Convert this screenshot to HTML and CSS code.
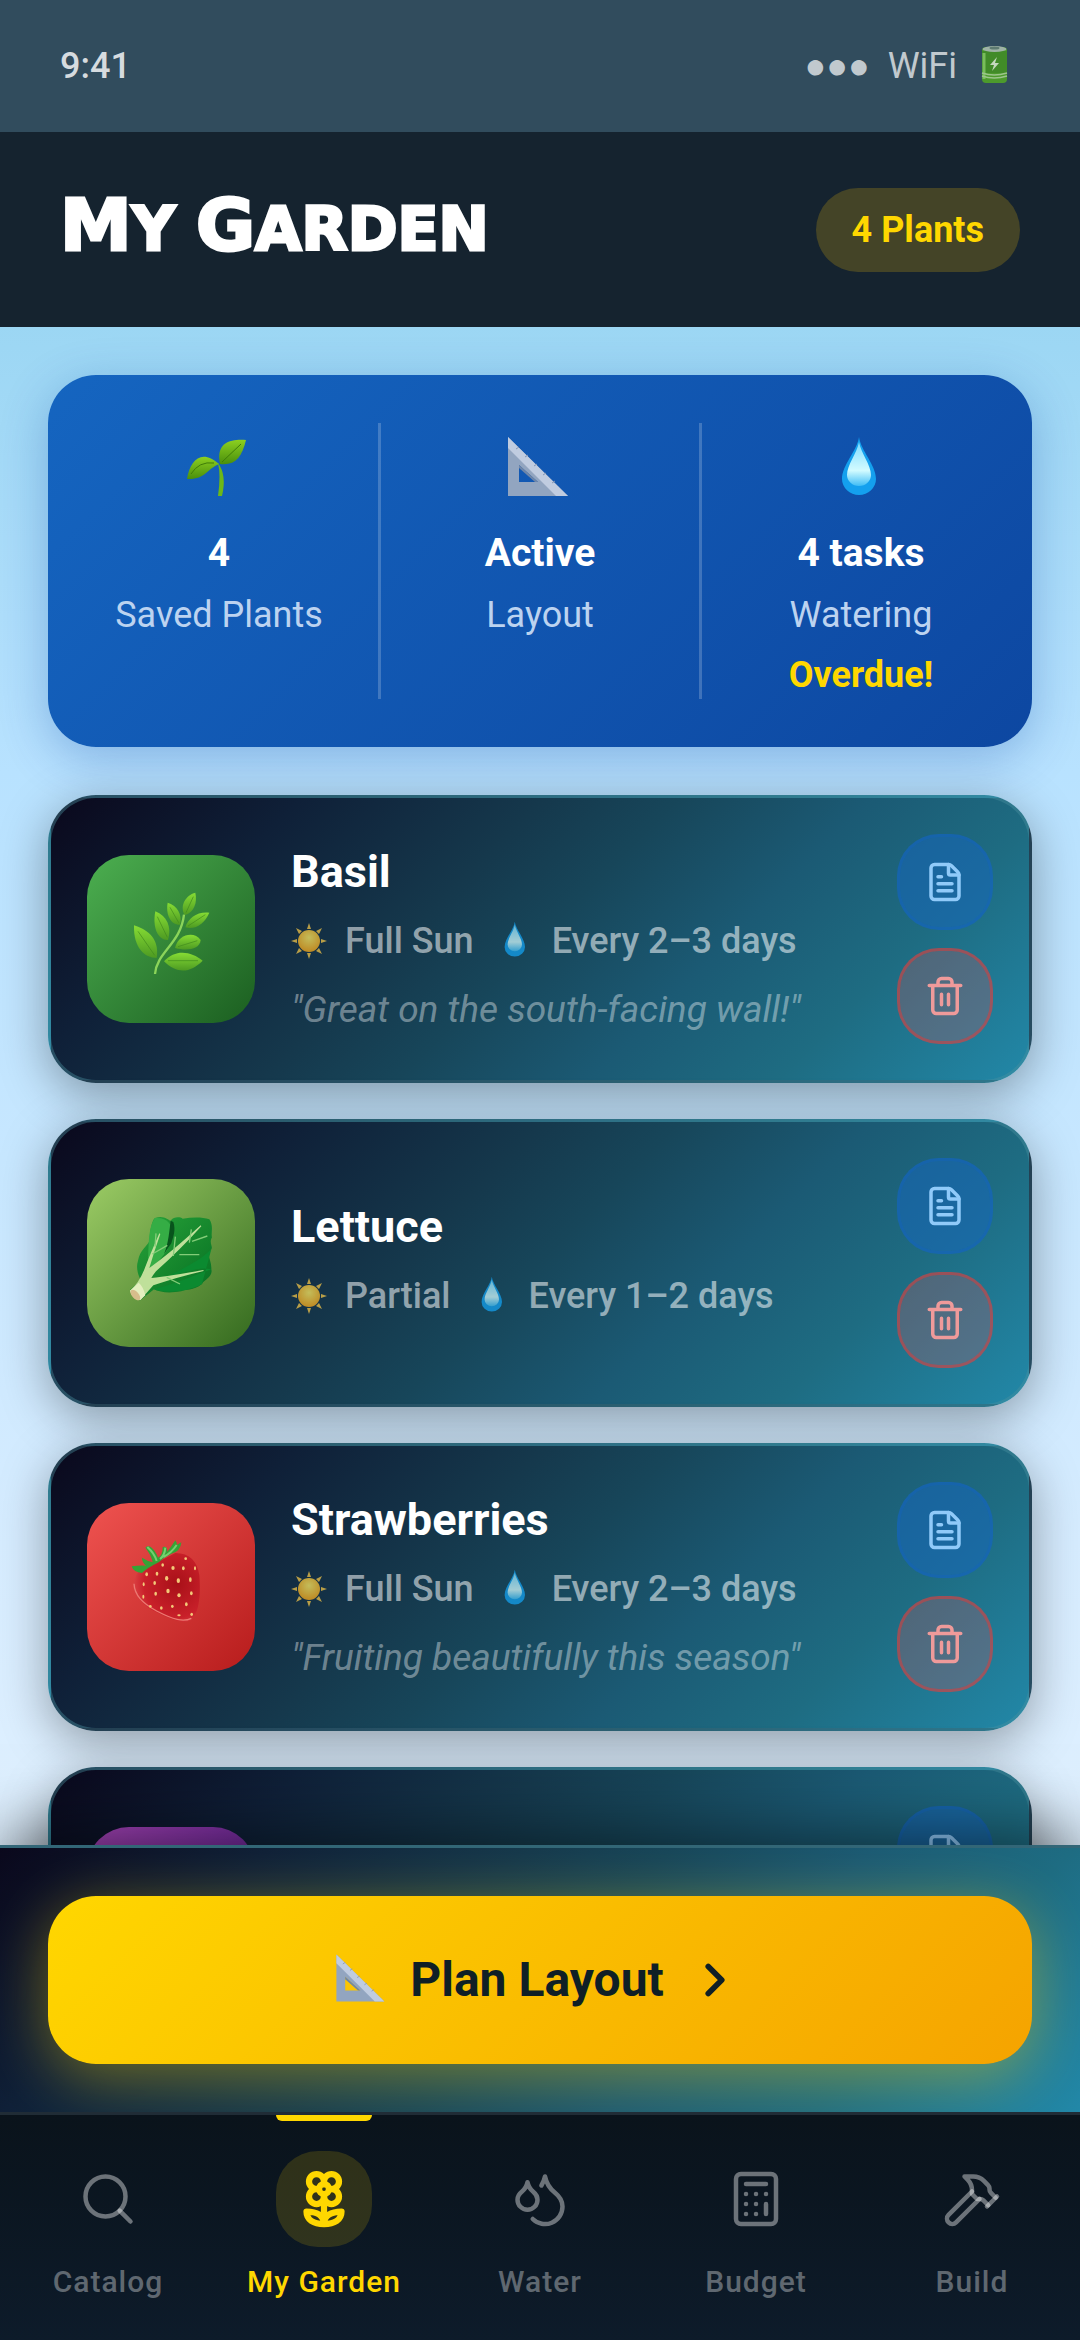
FILE: index.html
```html
<!DOCTYPE html>
<html lang="en">
<head>
<meta charset="utf-8">
<meta name="viewport" content="width=device-width, initial-scale=1">
<title>My Garden</title>
<link rel="stylesheet" href="styles.css">
</head>
<body>
<svg class="defs" aria-hidden="true">
  <defs>
    <linearGradient id="g-leaf" x1="0" y1="0" x2="0" y2="1"><stop offset="0" stop-color="#8cd020"/><stop offset="1" stop-color="#4a8f0c"/></linearGradient>
    <linearGradient id="g-drop" x1="0" y1="0" x2="0" y2="1"><stop offset="0" stop-color="#7fdcff"/><stop offset="0.65" stop-color="#d2fbff"/><stop offset="1" stop-color="#3fbdf6"/></linearGradient>
    <radialGradient id="g-sun" cx="0.5" cy="0.35" r="0.65"><stop offset="0" stop-color="#ffec62"/><stop offset="1" stop-color="#f8a818"/></radialGradient>
    <linearGradient id="g-lettuce" x1="0" y1="0" x2="1" y2="1"><stop offset="0" stop-color="#2aa53a"/><stop offset="1" stop-color="#056e22"/></linearGradient>
    <radialGradient id="g-berry" cx="0.65" cy="0.45" r="0.7"><stop offset="0" stop-color="#a81018"/><stop offset="0.7" stop-color="#c9202a"/><stop offset="1" stop-color="#e04a4a"/></radialGradient>
    <linearGradient id="g-sprig" x1="0" y1="0" x2="0" y2="1"><stop offset="0" stop-color="#86dc34"/><stop offset="1" stop-color="#4d9a22"/></linearGradient>
    <symbol id="drop" viewBox="2 2 60 60"><path d="M30 0C32 14 47 28 47 42a17 16 0 0 1-34 0C13 28 28 14 30 0Z" fill="#14a0ee"/><path d="M30 5C32 16 42 28 42 38a12 11 0 0 1-24 0C18 28 28 16 30 5Z" fill="url(#g-drop)"/></symbol>
    <symbol id="sun" viewBox="0 0 36 36"><g fill="#f0c348"><path d="m18 0 2 6h-4ZM18 36l2-6h-4ZM0 18l6-2v4ZM36 18l-6-2v4ZM5 5l6 3-3 3ZM31 5l-6 3 3 3ZM5 31l6-3-3-3ZM31 31l-6-3 3-3Z"/></g><circle cx="18" cy="18" r="11" fill="url(#g-sun)"/></symbol>
    <symbol id="square" viewBox="2 2 60 60"><path fill-rule="evenodd" d="M0 0 60 59H0ZM11 28v17h19Z" fill="#92a5c0"/><path d="M0 0 60 59H48L0 11Z" fill="#c0cce0"/><path d="m11 28 19 17h-3L11 31Z" fill="#6f86a8"/><path d="m8 12 3-2M17 20l3-2M26 29l3-2M35 38l3-2M44 46l3-2" stroke="#8496b4"/></symbol>
    <symbol id="note" viewBox="0 0 24 24"><path d="M6 22a2 2 0 0 1-2-2V4a2 2 0 0 1 2-2h8a2.4 2.4 0 0 1 1.704.706l3.588 3.588A2.4 2.4 0 0 1 20 8v12a2 2 0 0 1-2 2z"/><path d="M14 2v5a1 1 0 0 0 1 1h5M10 9H8M16 13H8M16 17H8"/></symbol>
    <symbol id="trash" viewBox="0 0 24 24"><path d="M10 11v6M14 11v6M19 6v14a2 2 0 0 1-2 2H7a2 2 0 0 1-2-2V6M3 6h18M8 6V4a2 2 0 0 1 2-2h4a2 2 0 0 1 2 2v2"/></symbol>
  </defs>
</svg>

<div class="status-bar">
  <span class="time">9:41</span>
  <span class="status-icons">
    <span class="signal">●●●</span>
    <span>WiFi</span>
    <svg class="battery" viewBox="3 2 45 45" role="img" aria-label="Battery"><rect x="10" y="5" width="25" height="36" rx="4" fill="#4c9a2c"/><rect x="10" y="9" width="25" height="22" fill="#418b28"/><ellipse cx="22.500" cy="7" rx="12" ry="3" fill="#9fb3a6"/><ellipse cx="22.500" cy="6" rx="5" ry="1.500" fill="#5d7a70"/><path d="M12 11v26" stroke="#79bd5b" stroke-width="3"/><path d="M10 31q12 4 25 0M10 34q12 4 25 0" stroke="#9cc58c" stroke-width="1.500" fill="none"/><path d="m25 15-7 8h4l-2 6 7-8h-4Z" fill="#c4d8bd"/></svg>
  </span>
</div>

<header class="header">
  <h1 class="title"><span class="cap">M</span>y <span class="cap">G</span>arden</h1>
  <span class="badge">4 Plants</span>
</header>

<main class="content">
  <section class="stats" aria-label="Summary">
    <div class="stat">
      <svg class="stat-icon" viewBox="0 0 60 60"><path d="M29 24q9 12 4 33h-4Q32 36 29 24Z" fill="#6cb818"/><path d="M31 25C26 2 44 0 57 1 53 18 46 27 31 25Z" fill="url(#g-leaf)"/><path d="M30 25C12 9 1 22-2 40 16 41 18 30 30 25Z" fill="url(#g-leaf)"/><path d="M33 23 52 5M25 24Q10 22 2 35" stroke="#3f7d08" fill="none"/></svg>
      <strong class="stat-value">4</strong>
      <span class="stat-label">Saved Plants</span>
    </div>
    <div class="stat">
      <svg class="stat-icon"><use href="#square"/></svg>
      <strong class="stat-value">Active</strong>
      <span class="stat-label">Layout</span>
    </div>
    <div class="stat">
      <svg class="stat-icon"><use href="#drop"/></svg>
      <strong class="stat-value">4 tasks</strong>
      <span class="stat-label">Watering</span>
      <strong class="stat-alert">Overdue!</strong>
    </div>
  </section>

  <article class="plant">
    <div class="tile basil">
      <svg class="tile-icon" viewBox="39 33 288 288">
        <g fill="url(#g-sprig)"><path d="M72 136C104 146 150 170 140 234 104 234 70 204 72 136Z"/><path d="M136 94C170 108 186 140 174 180 146 182 126 146 136 94Z"/><path d="M173 68C200 76 218 102 210 134 184 136 166 106 173 68Z"/><path d="M256 38C262 66 254 96 224 106 208 78 226 46 256 38Z"/><path d="M298 98C284 130 258 150 226 142 234 114 262 94 298 98Z"/><path d="M195 204C206 160 254 154 272 180 270 208 230 214 195 204Z"/><path d="M162 244C196 206 244 214 278 242 244 276 204 286 162 244Z"/></g>
        <path d="M135 282C140 216 212 192 222 104" stroke="#8bd45a" stroke-width="7" fill="none"/>
        <path d="M84 154 134 226M142 110 172 172M180 82 206 128M250 50 228 98M286 104 234 138M262 182 204 200M264 242 174 242" stroke="#3f8a1c" stroke-width="2" fill="none"/>
      </svg>
    </div>
    <div class="info">
      <h2 class="name">Basil</h2>
      <div class="meta"><span class="meta-item"><svg class="meta-icon"><use href="#sun"/></svg>Full Sun</span><span class="meta-item"><svg class="meta-icon"><use href="#drop"/></svg>Every 2–3 days</span></div>
      <p class="quote">"Great on the south-facing wall!"</p>
    </div>
    <div class="actions">
      <button class="action edit" aria-label="Notes"><svg><use href="#note"/></svg></button>
      <button class="action remove" aria-label="Remove"><svg><use href="#trash"/></svg></button>
    </div>
  </article>

  <article class="plant">
    <div class="tile lettuce">
      <svg class="tile-icon" viewBox="369 345 288 288">
        <path d="M465 354C490 344 505 360 512 362 520 350 540 350 548 356 575 352 605 350 628 358 642 378 632 400 636 412 626 430 640 440 634 448 616 464 636 480 634 508 640 530 612 540 606 552 580 574 556 566 544 574 510 580 480 578 462 568L421 601Q396 594 390 570L422 540C412 520 408 500 414 482 420 450 440 440 448 424 450 390 456 360 465 354Z" fill="url(#g-lettuce)"/>
        <path d="M465 354C505 350 522 380 516 408 512 450 480 480 440 520 450 470 438 390 465 354Z" fill="#35ad45"/>
        <path d="M520 366C528 390 520 410 514 430L492 462C506 430 508 390 512 362Z" fill="#08531c"/>
        <path d="M634 448C600 480 560 502 500 530 550 520 600 498 634 508L600 520C560 536 520 552 462 568 480 578 560 580 606 552" fill="#0b8a30"/>
        <path d="M390 572Q420 546 436 500 452 460 478 400L481 402Q462 456 448 504 510 460 602 376L604 379Q540 450 468 514 460 524 454 534 510 528 610 510L611 513Q530 532 460 556L421 600Q396 594 390 572Z" fill="#bfe09a"/>
        <path d="M465 440 468 400M457 462 502 436M520 468 526 410M538 464 598 464M568 428 574 388M576 424 622 408M500 532 540 552" stroke="#83cc78" stroke-width="4" fill="none"/>
        <path d="M390 572 Q404 560 416 548 Q430 560 436 586 L421 600Q396 594 390 572Z" fill="#e4efc0"/>
        <ellipse cx="406" cy="585" rx="19" ry="10" transform="rotate(48 406 585)" fill="#d6bd8c"/>
      </svg>
    </div>
    <div class="info">
      <h2 class="name">Lettuce</h2>
      <div class="meta"><span class="meta-item"><svg class="meta-icon"><use href="#sun"/></svg>Partial</span><span class="meta-item"><svg class="meta-icon"><use href="#drop"/></svg>Every 1–2 days</span></div>
    </div>
    <div class="actions">
      <button class="action edit" aria-label="Notes"><svg><use href="#note"/></svg></button>
      <button class="action remove" aria-label="Remove"><svg><use href="#trash"/></svg></button>
    </div>
  </article>

  <article class="plant">
    <div class="tile strawberry">
      <svg class="tile-icon" viewBox="39 42 288 288">
        <path d="M84 142C110 124 150 110 196 84 240 84 262 110 268 150 272 200 270 262 244 284 220 300 180 282 140 262 96 242 62 200 72 174 74 160 78 150 84 142Z" fill="url(#g-berry)"/>
        <path d="M72 176C74 210 96 234 140 258 190 284 220 292 244 280" stroke="#ec7a72" stroke-width="4" fill="none"/>
        <path d="M65 124Q90 120 108 122 96 112 96 98 112 108 128 112 124 90 106 68 118 56 134 78 142 90 144 98 158 92 158 66 172 62 172 80 186 62 196 46 202 54 200 60L214 52Q212 80 184 86 160 98 146 112 110 130 96 144 70 142 65 124Z" fill="#35a436"/>
        <path d="M112 66Q134 86 140 108M166 68Q164 92 150 102M200 60Q184 84 160 96" stroke="#74d070" stroke-width="6" fill="none"/>
        <g fill="#f3c878"><ellipse cx="110" cy="148" rx="4" ry="6"/><ellipse cx="141" cy="146" rx="4" ry="6"/><ellipse cx="158" cy="120" rx="4" ry="5"/><ellipse cx="189" cy="129" rx="5" ry="6"/><ellipse cx="220" cy="130" rx="4" ry="6"/><ellipse cx="227" cy="101" rx="4" ry="4"/><ellipse cx="255" cy="130" rx="3" ry="6"/><ellipse cx="170" cy="160" rx="5" ry="7"/><ellipse cx="205" cy="167" rx="5" ry="7"/><ellipse cx="241" cy="164" rx="4" ry="7"/><ellipse cx="134" cy="174" rx="4" ry="6"/><ellipse cx="101" cy="178" rx="3" ry="6"/><ellipse cx="174" cy="198" rx="5" ry="7"/><ellipse cx="207" cy="211" rx="5" ry="6"/><ellipse cx="244" cy="205" rx="4" ry="6"/><ellipse cx="137" cy="206" rx="4" ry="6"/><ellipse cx="100" cy="215" rx="3" ry="6"/><ellipse cx="187" cy="244" rx="4" ry="5"/><ellipse cx="229" cy="238" rx="4" ry="6"/><ellipse cx="154" cy="249" rx="4" ry="5"/><ellipse cx="121" cy="244" rx="4" ry="4"/><ellipse cx="245" cy="268" rx="4" ry="5"/><ellipse cx="207" cy="271" rx="5" ry="3"/></g>
      </svg>
    </div>
    <div class="info">
      <h2 class="name">Strawberries</h2>
      <div class="meta"><span class="meta-item"><svg class="meta-icon"><use href="#sun"/></svg>Full Sun</span><span class="meta-item"><svg class="meta-icon"><use href="#drop"/></svg>Every 2–3 days</span></div>
      <p class="quote">"Fruiting beautifully this season"</p>
    </div>
    <div class="actions">
      <button class="action edit" aria-label="Notes"><svg><use href="#note"/></svg></button>
      <button class="action remove" aria-label="Remove"><svg><use href="#trash"/></svg></button>
    </div>
  </article>

  <article class="plant">
    <div class="tile purple"></div>
    <div class="info"></div>
    <div class="actions">
      <button class="action edit" aria-label="Notes"><svg><use href="#note"/></svg></button>
      <button class="action remove" aria-label="Remove"><svg><use href="#trash"/></svg></button>
    </div>
  </article>
</main>

<div class="cta-bar">
  <button class="cta">
    <svg class="cta-icon"><use href="#square"/></svg>
    Plan Layout
    <svg class="cta-arrow" viewBox="0 0 24 24"><path d="m9 18 6-6-6-6"/></svg>
  </button>
</div>

<nav class="nav">
  <a class="nav-item" href="#catalog">
    <span class="nav-icon"><svg viewBox="0 0 24 24"><path d="m21 21-4.340-4.340"/><circle cx="11" cy="11" r="8"/></svg></span>Catalog
  </a>
  <a class="nav-item active" href="#garden" aria-current="page">
    <span class="nav-icon"><svg viewBox="0 0 24 24"><path d="M12 5a3 3 0 1 1 3 3m-3-3a3 3 0 1 0-3 3m3-3v1M9 8a3 3 0 1 0 3 3M9 8h1m5 0a3 3 0 1 1-3 3m3-3h-1m-2 3v-1"/><circle cx="12" cy="8" r="2"/><path d="M12 10v12M12 22c4.200 0 7-1.667 7-5-4.200 0-7 1.667-7 5ZM12 22c-4.200 0-7-1.667-7-5 4.200 0 7 1.667 7 5Z"/></svg></span>My Garden
  </a>
  <a class="nav-item" href="#water">
    <span class="nav-icon"><svg viewBox="0 0 24 24"><path d="M7 16.300c2.200 0 4-1.830 4-4.050 0-1.160-.570-2.260-1.710-3.190S7.290 6.750 7 5.300c-.290 1.450-1.140 2.840-2.290 3.760S3 11.100 3 12.250c0 2.220 1.800 4.050 4 4.050z"/><path d="M12.560 6.600A10.970 10.970 0 0 0 14 3.020c.500 2.500 2 4.900 4 6.500s3 3.500 3 5.500a6.980 6.980 0 0 1-11.910 4.970"/></svg></span>Water
  </a>
  <a class="nav-item" href="#budget">
    <span class="nav-icon"><svg viewBox="0 0 24 24"><rect width="16" height="20" x="4" y="2" rx="2"/><path d="M8 6h8M16 14v4M16 10h.010M12 10h.010M8 10h.010M12 14h.010M8 14h.010M12 18h.010M8 18h.010"/></svg></span>Budget
  </a>
  <a class="nav-item" href="#build">
    <span class="nav-icon"><svg viewBox="0 0 24 24"><path d="m15 12-9.373 9.373a1 1 0 0 1-3.001-3L12 9"/><path d="m18 15 4-4"/><path d="m21.500 11.500-1.914-1.914A2 2 0 0 1 19 8.172v-.344a2 2 0 0 0-.586-1.414l-1.657-1.657A6 6 0 0 0 12.516 3H9l1.243 1.243A6 6 0 0 1 12 8.485V10l2 2h1.172a2 2 0 0 1 1.414.586L18.500 14.500"/></svg></span>Build
  </a>
</nav>
</body>
</html>
```
FILE: styles.css
```css
:root {
  --gold: #ffd700;
  --deep: linear-gradient(135deg, #0a081c 0%, #0f2038 20%, #15384c 39%, #17465a 50%, #1b5a74 65%, #1e6c82 80%, #2288a8 100%);
}

* {
  box-sizing: border-box;
  margin: 0;
}

body {
  display: flex;
  flex-direction: column;
  height: 100vh;
  overflow: hidden;
  font-family: Roboto, "Liberation Sans", sans-serif;
  font-size: 36px;
  line-height: 48px;
  color: #fff;
  background: linear-gradient(180deg, #87ceeb 0%, #b8e2ff 33%, #d6ecff 66%, #f0f8ff 100%);
}

button {
  font: inherit;
  border: 0;
  padding: 0;
}

.defs {
  position: absolute;
  width: 0;
  height: 0;
}

.status-bar {
  flex: none;
  display: flex;
  justify-content: space-between;
  align-items: center;
  padding: 42px 60px;
  color: #d6dbdf;
  background: #314c5d;
}

.time {
  font-weight: 500;
}

.status-icons {
  display: flex;
  align-items: center;
  gap: 18px;
  color: #c1c9ce;
}

.signal {
  font-family: "Liberation Sans", sans-serif;
}

.battery {
  width: 45px;
  height: 45px;
}

.header {
  flex: none;
  display: flex;
  justify-content: space-between;
  align-items: center;
  padding: 48px 60px;
  background: #15232f;
}

.title {
  font-family: "DejaVu Sans", sans-serif;
  font-weight: 700;
  font-size: 60px;
  line-height: 99px;
  text-transform: uppercase;
  -webkit-text-stroke: 3px #fff;
}

.cap {
  font-size: 72px;
  line-height: 48px;
}

.badge {
  padding: 18px 36px;
  border-radius: 42px;
  font-weight: 700;
  color: var(--gold);
  background: #444427;
}

.content {
  flex: 1;
  min-height: 0;
  overflow: hidden;
  display: flex;
  flex-direction: column;
  gap: 36px;
  padding: 48px;
}

.stats {
  flex: none;
  display: flex;
  margin-bottom: 12px;
  padding: 48px 12px;
  border-radius: 48px;
  background: linear-gradient(135deg, #1565c0, #0d47a1);
  box-shadow: 0 12px 48px rgba(13, 71, 161, 0.3);
}

.stat {
  flex: 1;
  display: flex;
  flex-direction: column;
  align-items: center;
  gap: 12px;
}

.stat + .stat {
  border-left: 3px solid rgba(255, 255, 255, 0.2);
}

.stat-icon {
  width: 60px;
  height: 60px;
  margin: 16px 0 17px;
  overflow: visible;
}

symbol {
  overflow: visible;
}

.stat-value {
  font-size: 39px;
  line-height: 51px;
}

.stat-label {
  color: #bcd3f0;
}

.stat-alert {
  color: var(--gold);
}

.plant {
  flex: none;
  display: flex;
  align-items: center;
  gap: 36px;
  padding: 36px;
  border: 3px solid rgba(74, 144, 160, 0.4);
  border-radius: 48px;
  background: var(--deep);
  box-shadow: 0 12px 48px rgba(0, 0, 0, 0.35);
}

.tile {
  display: grid;
  place-items: center;
  width: 168px;
  height: 168px;
  border-radius: 42px;
}

.basil { background: linear-gradient(135deg, #4caf50, #1b5e20); }
.lettuce { background: linear-gradient(135deg, #9ccc65, #33691e); }
.strawberry { background: linear-gradient(135deg, #ef5350, #b71c1c); }
.purple { background: linear-gradient(135deg, #ab47bc, #4a148c); }

.tile-icon {
  width: 96px;
  height: 96px;
}

.info {
  flex: 1;
  display: flex;
  flex-direction: column;
  gap: 12px;
}

.name {
  font-size: 45px;
  line-height: 54px;
}

.meta {
  display: flex;
  gap: 24px;
  line-height: 60px;
  font-weight: 500;
  color: rgba(255, 255, 255, 0.55);
}

.meta-item {
  display: flex;
  align-items: center;
  gap: 18px;
}

.meta-icon {
  width: 36px;
  height: 36px;
  opacity: 0.75;
  overflow: visible;
}

.quote {
  padding-top: 3px;
  font-size: 37px;
  font-style: italic;
  color: rgba(255, 255, 255, 0.4);
}

.actions {
  display: flex;
  flex-direction: column;
  gap: 18px;
}

.action {
  display: grid;
  place-items: center;
  width: 96px;
  height: 96px;
  border-radius: 42px;
}

.action svg {
  width: 42px;
  height: 42px;
  fill: none;
  stroke: currentColor;
  stroke-width: 2;
  stroke-linecap: round;
  stroke-linejoin: round;
}

.edit {
  color: #90caf9;
  border: 3px solid rgba(21, 101, 192, 0.4);
  background: rgba(21, 101, 192, 0.5);
}

.remove {
  color: #ef9a9a;
  border: 3px solid rgba(229, 57, 53, 0.5);
  background: rgba(229, 83, 90, 0.25);
}

.cta-bar {
  flex: none;
  position: relative;
  padding: 48px;
  border-top: 3px solid rgba(74, 144, 160, 0.6);
  background: var(--deep) padding-box, #10283a;
  box-shadow: 0 -12px 60px rgba(0, 0, 0, 0.5);
}

.cta {
  display: flex;
  justify-content: center;
  align-items: center;
  gap: 24px;
  width: 100%;
  height: 168px;
  border-radius: 48px;
  font-size: 48px;
  font-weight: 700;
  color: #0f1f26;
  background: linear-gradient(135deg, #ffd700, #f5a300);
  box-shadow: 0 12px 60px rgba(255, 215, 0, 0.4);
}

.cta-icon {
  width: 48px;
  height: 48px;
  overflow: visible;
}

.cta-arrow {
  width: 54px;
  height: 54px;
  fill: none;
  stroke: currentColor;
  stroke-width: 2.5;
  stroke-linecap: round;
  stroke-linejoin: round;
}

.nav {
  flex: none;
  position: relative;
  display: flex;
  border-top: 3px solid #202c36;
  background: linear-gradient(180deg, #0a131b, #0d1b2a);
}

.nav-item {
  flex: 1;
  position: relative;
  display: flex;
  flex-direction: column;
  align-items: center;
  gap: 12px;
  padding: 36px 0;
  font-size: 30px;
  font-weight: 500;
  line-height: 45px;
  letter-spacing: 1px;
  text-decoration: none;
  color: rgba(255, 255, 255, 0.35);
}

.nav-icon {
  display: grid;
  place-items: center;
  width: 96px;
  height: 96px;
  border-radius: 42px;
  color: rgba(255, 255, 255, 0.4);
}

.nav-icon svg {
  width: 60px;
  height: 60px;
  fill: none;
  stroke: currentColor;
  stroke-width: 1.8;
  stroke-linecap: round;
  stroke-linejoin: round;
}

.active,
.active .nav-icon {
  color: var(--gold);
}

.active .nav-icon {
  background: rgba(255, 215, 0, 0.15);
}

.active .nav-icon svg {
  stroke-width: 2.5;
}

.active::before {
  content: "";
  position: absolute;
  top: 0;
  width: 96px;
  height: 6px;
  border-radius: 0 0 6px 6px;
  background: var(--gold);
}
```
